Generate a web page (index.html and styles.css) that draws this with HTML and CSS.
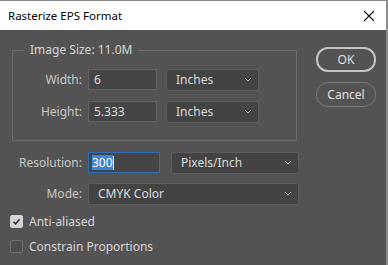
FILE: index.html
```html
<!DOCTYPE html>
<html lang="en">
<head>
    <meta charset="UTF-8">
    <title>Rasterize EPS Format</title>
    <link rel="stylesheet" href="styles.css">
</head>
<body>
    <div class="window">
        <div class="titlebar">
            <span class="title">Rasterize EPS Format</span>
            <svg class="close" width="12" height="12" viewBox="0 0 12 12">
                <path d="M1 1 L11 11 M11 1 L1 11" stroke="#111" stroke-width="1.1" fill="none"/>
            </svg>
        </div>
        <div class="dialog">
            <div class="left">
                <fieldset class="group">
                    <legend>Image Size: 11.0M</legend>
                    <div class="row">
                        <label class="lbl">Width:</label>
                        <div class="field w-size">6</div>
                        <div class="dropdown w-unit"><span>Inches</span>
                            <svg width="8" height="5" viewBox="0 0 8 5"><path d="M1 1 L4 4 L7 1" stroke="#bbb" fill="none"/></svg>
                        </div>
                    </div>
                    <div class="row">
                        <label class="lbl">Height:</label>
                        <div class="field w-size">5.333</div>
                        <div class="dropdown w-unit"><span>Inches</span>
                            <svg width="8" height="5" viewBox="0 0 8 5"><path d="M1 1 L4 4 L7 1" stroke="#bbb" fill="none"/></svg>
                        </div>
                    </div>
                </fieldset>
                <div class="row outer res">
                    <label class="lbl">Resolution:</label>
                    <div class="field focus w-res"><span class="sel">300</span><span class="caret"></span></div>
                    <div class="dropdown w-resunit"><span>Pixels/Inch</span>
                        <svg width="8" height="5" viewBox="0 0 8 5"><path d="M1 1 L4 4 L7 1" stroke="#bbb" fill="none"/></svg>
                    </div>
                </div>
                <div class="row outer">
                    <label class="lbl">Mode:</label>
                    <div class="dropdown w-mode"><span>CMYK Color</span>
                        <svg width="8" height="5" viewBox="0 0 8 5"><path d="M1 1 L4 4 L7 1" stroke="#bbb" fill="none"/></svg>
                    </div>
                </div>
                <div class="check first">
                    <span class="box on">
                        <svg width="11" height="11" viewBox="0 0 11 11"><path d="M2.5 5.8 L4.6 7.8 L8.6 3.2" stroke="#333" stroke-width="1.6" fill="none"/></svg>
                    </span>
                    <span>Anti-aliased</span>
                </div>
                <div class="check">
                    <span class="box"></span>
                    <span>Constrain Proportions</span>
                </div>
            </div>
            <div class="buttons">
                <button class="btn primary">OK</button>
                <button class="btn">Cancel</button>
            </div>
        </div>
    </div>
</body>
</html>
```

FILE: styles.css
```css
html, body {
    margin: 0;
    padding: 0;
    height: 100%;
    background: #535353;
}
body {
    font-family: "Noto Sans", "Open Sans", sans-serif;
    font-size: 12px;
    color: #d6d6d6;
}
.window {
    height: 265px;
    box-sizing: border-box;
    border-top: 1px solid #8a8a8a;
    border-right: 2px solid #8c8c8c;
    background: #535353;
}
.titlebar {
    height: 29px;
    background: #fff;
    display: flex;
    align-items: center;
    justify-content: space-between;
    padding: 0 9px 0 8px;
    color: #000;
    font-size: 11.5px;
}
.title {
    margin-top: -1px;
}
.close {
    margin-right: 2px;
}
.dialog {
    display: flex;
}
.left {
    width: 299px;
}
.group {
    margin: 12px 0 0 12px;
    padding: 11px 0 18px 0;
    width: 285px;
    box-sizing: border-box;
    border: 1px solid #6c6c6c;
}
.group legend {
    margin-left: 11px;
    padding: 0 6px;
    line-height: 16px;
    color: #d6d6d6;
}
.row {
    display: flex;
    align-items: center;
    height: 21px;
    margin-bottom: 11px;
}
.group .row:last-child {
    margin-bottom: 0;
}
.group .lbl {
    width: 75px;
}
.lbl {
    box-sizing: border-box;
    text-align: right;
    padding-right: 6px;
    color: #c9c9c9;
}
.outer .lbl {
    width: 88px;
}
.row.outer {
    margin-bottom: 10px;
}
.row.res {
    margin-top: 11px;
}
.field {
    height: 21px;
    box-sizing: border-box;
    background: #454545;
    border: 1px solid #646464;
    display: flex;
    align-items: center;
    padding-left: 5px;
    color: #dcdcdc;
}
.field.focus {
    border-color: #2f6fb6;
    padding-left: 3px;
}
.sel {
    background: #3d86d6;
    color: #fff;
    line-height: 15px;
}
.caret {
    width: 1px;
    height: 14px;
    background: #eee;
}
.w-size {
    width: 69px;
}
.w-res {
    width: 72px;
}
.dropdown {
    height: 22px;
    box-sizing: border-box;
    background: #434343;
    border: 1px solid #5c5c5c;
    border-radius: 2px;
    display: flex;
    align-items: center;
    justify-content: space-between;
    padding: 0 6px 0 9px;
    color: #dcdcdc;
}
.w-unit {
    width: 93px;
    margin-left: 9px;
}
.w-resunit {
    width: 128px;
    margin-left: 11px;
}
.w-mode {
    width: 211px;
}
.check {
    display: flex;
    align-items: center;
    margin-left: 10px;
    height: 14px;
    margin-bottom: 11px;
    gap: 6px;
    color: #d6d6d6;
}
.check.first {
    margin-top: 9px;
}
.box {
    width: 13px;
    height: 13px;
    box-sizing: border-box;
    border: 1px solid #6e6e6e;
    border-radius: 2px;
    background: #4d4d4d;
    display: flex;
    align-items: center;
    justify-content: center;
}
.box.on {
    background: #d2d2d2;
    border-color: #d2d2d2;
}
.buttons {
    display: flex;
    flex-direction: column;
    gap: 10px;
    margin: 17px 0 0 17px;
}
.btn {
    width: 60px;
    height: 25px;
    border-radius: 12px;
    background: #535353;
    border: 1px solid #7a7a7a;
    color: #e0e0e0;
    font-family: inherit;
    font-size: 12px;
    padding: 0;
}
.btn.primary {
    border: 2px solid #c4c4c4;
}
```
